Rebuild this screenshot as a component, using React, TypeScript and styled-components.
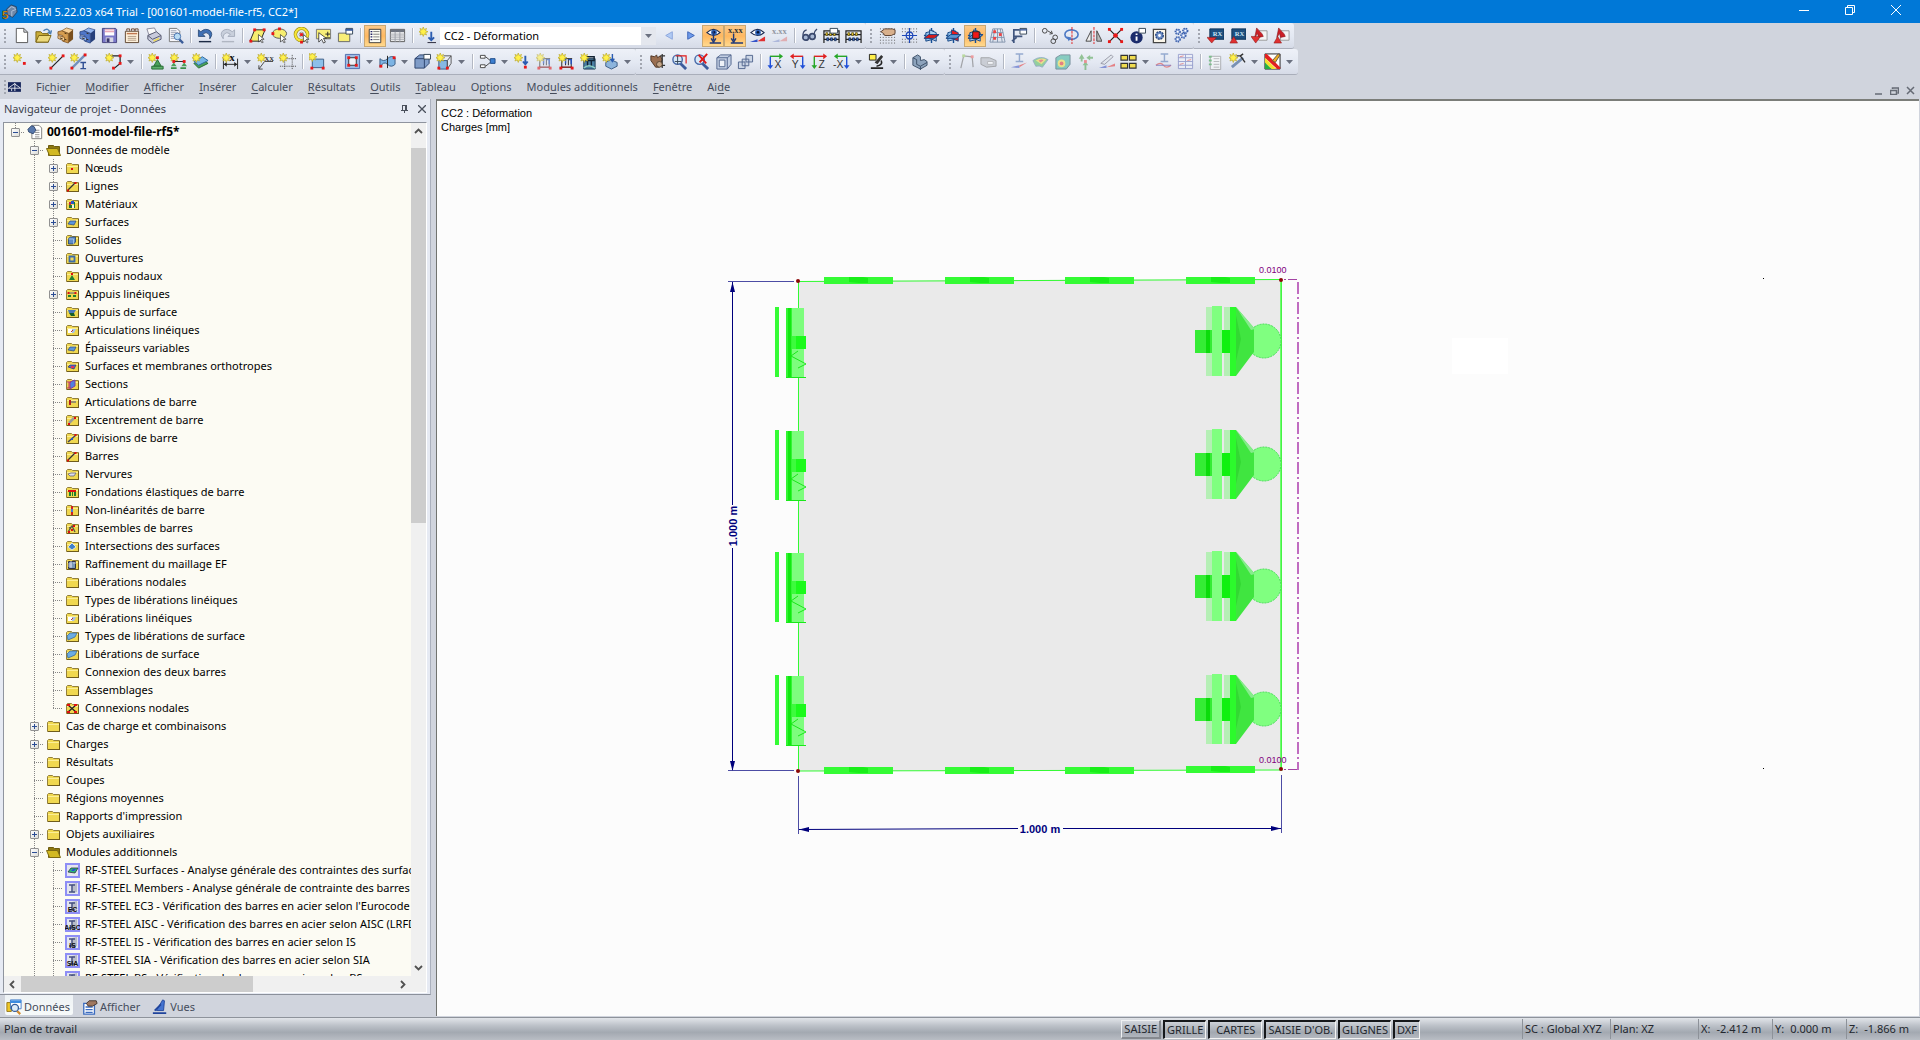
import React, { ReactNode } from "react";
import styled, { createGlobalStyle, css } from "styled-components";

/* ---------- theme ---------- */

const ui = '"Noto Sans", "Open Sans", sans-serif';
const sans = '"Liberation Sans", Arial, sans-serif';

const GlobalStyle = createGlobalStyle`
  * { box-sizing: border-box; }
  html, body, #root { height: 100%; }
  body { margin: 0; overflow: hidden; font: 11px/16px ${ui}; color: #000; }
  button { margin: 0; padding: 0; border: 0; background: none; font: inherit; color: inherit; }
  ul { margin: 0; padding: 0; list-style: none; }
`;

const Window = styled.div`
  display: flex;
  flex-direction: column;
  height: 100vh;
  background: #d0d4dd;
`;

/* ---------- title bar ---------- */

const TitleBar = styled.header`
  display: flex;
  align-items: center;
  height: 23px;
  flex: none;
  padding-left: 2px;
  background: #0078d7;
  color: #fff;
`;

const Title = styled.h1`
  flex: 1;
  margin: 0 0 0 5px;
  font-size: 11px;
  font-weight: 400;
`;

const WindowButton = styled.button`
  display: grid;
  place-items: center;
  width: 46px;
  height: 23px;
  padding: 0 2px 3px 0;
`;

/* ---------- toolbars ---------- */

const Toolbars = styled.div`
  flex: none;
`;

const ToolbarRow = styled.div`
  display: flex;
  height: 26px;
`;

const Toolbar = styled.div`
  display: flex;
  align-items: center;
  height: 26px;
  padding-right: 2px;
  border-bottom: 1px solid #a9aeba;
  border-radius: 0 3px 3px 0;
  background: linear-gradient(#eef1f8, #e3e8f2 55%, #d6dbe7);
`;

const Grip = styled.span`
  width: 10px;
  height: 16px;
  background: radial-gradient(circle at 1px 1px, #a2a6b0 1px, transparent 1px) 4px 1px / 3px 4px repeat-y;
`;

const Separator = styled.span`
  width: 8px;
  height: 15px;
  border-left: 4px solid transparent;
  background: linear-gradient(90deg, #b3b8c3 1px, #fff 1px 2px, transparent 2px) no-repeat;
`;

const ToolButton = styled.button<{ $active?: boolean; $dim?: boolean }>`
  display: grid;
  place-items: center;
  width: 22px;
  height: 22px;
  ${(p) =>
    p.$active &&
    css`
      border: 1px solid #c9a873;
      background: linear-gradient(#fbc98a, #ffb860 50%, #ffd98e);
    `}
  svg {
    display: block;
    opacity: ${(p) => (p.$dim ? 0.6 : 1)};
  }
`;

const MoreButton = styled.button`
  display: grid;
  place-items: center;
  width: 13px;
  height: 22px;
`;

const ComboBox = styled.label`
  display: flex;
  position: relative;
  width: 216px;
  height: 18px;
  margin: 0 2px;
  select {
    flex: 1;
    padding: 0 4px;
    border: 0;
    border-radius: 0;
    appearance: none;
    background: linear-gradient(90deg, #fff calc(100% - 15px), #e4e7ee 0);
    color: #000;
    font: inherit;
  }
  svg {
    position: absolute;
    right: 4px;
    top: 7px;
    pointer-events: none;
  }
`;

/* ---------- menu bar ---------- */

const MenuBar = styled.nav`
  display: flex;
  align-items: center;
  gap: 15px;
  height: 24px;
  padding-right: 2px;
  color: #454c5b;
`;

const MenuLead = styled.span`
  display: flex;
  align-items: center;
  width: 21px;
`;

const MenuItem = styled.button`
  white-space: nowrap;
  u { text-underline-offset: 2px; }
`;

const MdiButtons = styled.div`
  display: flex;
  margin-left: auto;
  padding-top: 7px;
  button { width: 16px; height: 16px; display: grid; place-items: center; }
`;

/* ---------- work area ---------- */

const Workspace = styled.main`
  display: flex;
  flex: 1;
  min-height: 0;
`;

const Navigator = styled.aside`
  display: flex;
  flex-direction: column;
  width: 431px;
  flex: none;
`;

const NavigatorPanel = styled.section`
  display: flex;
  flex: 1;
  flex-direction: column;
  min-height: 0;
  padding: 0 3px 1px;
  border-right: 1px solid #aab0bd;
  border-bottom: 1px solid #8b909b;
  background: #e6eaf3;
`;

const NavigatorHeader = styled.div`
  display: flex;
  align-items: center;
  height: 23px;
  margin-right: -3px;
  padding: 0 0 4px 1px;
  color: #3b414e;
  h2 { flex: 1; margin: 0; font-size: 11px; font-weight: 400; }
  button { width: 17px; height: 16px; display: grid; place-items: center; }
`;

const TreeFrame = styled.div`
  display: grid;
  grid-template: minmax(0, 1fr) 16px / minmax(0, 1fr) 15px;
  flex: 1;
  min-height: 0;
  border: 1px solid #8f949e;
  border-right-color: #fff;
  border-bottom-color: #fff;
  background: #f0f0f0;
`;

const Tree = styled.ul`
  overflow: hidden;
  padding-left: 2px;
  background: #fcfbf3;
`;

const TreeRow = styled.li<{ $root?: boolean }>`
  display: flex;
  align-items: center;
  height: 18px;
  font-size: ${(p) => (p.$root ? 12 : 11)}px;
  font-weight: ${(p) => (p.$root ? 700 : 400)};
  white-space: nowrap;
`;

type Line = "none" | "through" | "end" | "top";

const dots = (dir: string) => `repeating-linear-gradient(${dir}, #868686 0 1px, transparent 1px 2px)`;
const lineHeights: Record<Line, string> = { none: "0", through: "18px", end: "10px", top: "8px" };

const Guide = styled.span<{ $v: Line; $h?: boolean }>`
  display: grid;
  place-items: center;
  flex: none;
  width: 19px;
  height: 18px;
  padding-top: 1px;
  background-image: ${dots("180deg")}, ${dots("90deg")};
  background-repeat: no-repeat;
  background-position: 9px 0, 9px 9px;
  background-size: 1px ${(p) => lineHeights[p.$v]}, ${(p) => (p.$h ? "10px" : "0")} 1px;
`;

const Expander = styled.button`
  display: grid;
  place-items: center;
  width: 9px;
  height: 9px;
  border: 1px solid #919191;
  border-radius: 1px;
  background: linear-gradient(135deg, #fff, #dcdcd8);
`;

const TreeIcon = styled.span`
  display: grid;
  place-items: center;
  flex: none;
  width: 19px;
  height: 18px;
  margin-right: 3px;
`;

const VScroll = styled.div`
  display: flex;
  flex-direction: column;
  button { height: 25px; flex: none; display: grid; place-items: center; padding-bottom: 8px; }
  button:last-child { margin-top: auto; height: 17px; padding: 0; }
`;

const VThumb = styled.span`
  height: 44%;
  background: #cdcdcd;
`;

const HScroll = styled.div`
  display: flex;
  button { width: 17px; flex: none; display: grid; place-items: center; }
  button:last-child { margin-left: auto; }
`;

const HThumb = styled.span`
  width: 57%;
  background: #cdcdcd;
`;

const Tabs = styled.div`
  display: flex;
  align-items: flex-start;
  gap: 8px;
  height: 22px;
  padding-left: 5px;
  color: #454c5b;
`;

const Tab = styled.button<{ $on?: boolean }>`
  display: flex;
  align-items: center;
  gap: 2px;
  height: 20px;
  padding: 3px 3px 0 1px;
  border-radius: 0 0 2px 2px;
  background: ${(p) => (p.$on ? "linear-gradient(#eef2f5, #f7fafa)" : "none")};
`;

const Viewport = styled.section`
  display: flex;
  flex: 1;
  min-width: 0;
  margin: 0 1px 1px 5px;
  border: solid #71736f;
  border-width: 2px 0 0 1px;
  border-top-color: #7b7d79;
  background: #fcfcfc;
  position: relative;
`;

const Caption = styled.p`
  position: absolute;
  left: 4px;
  top: 5px;
  margin: 0;
  font: 11px/14px ${sans};
`;

const Drawing = styled.svg`
  display: block;
  width: 100%;
  height: 100%;
`;

/* ---------- status bar ---------- */

const StatusBar = styled.footer`
  display: flex;
  align-items: center;
  height: 23px;
  flex: none;
  border-top: 1px solid #8e939b;
  background: linear-gradient(#e2e5ea, #bcc1c8 35%, #a3a9b1 65%, #b9bdc4);
  color: #23272e;
`;

const StatusText = styled.span`
  flex: 1;
  padding-left: 4px;
`;

const Toggles = styled.div`
  display: flex;
  gap: 2px;
  margin-right: 102px;
`;

const Toggle = styled.button<{ $on?: boolean; $wide?: boolean }>`
  height: 19px;
  padding: 0 ${(p) => (p.$wide ? 6 : 2)}px;
  border: solid;
  border-width: ${(p) => (p.$on ? "2px 1px 1px 2px" : "1px 2px 2px 1px")};
  border-color: ${(p) => (p.$on ? "#15171a #f4f4f4 #f4f4f4 #15171a" : "#eef0f2 #85898f #85898f #eef0f2")};
  line-height: 15px;
  white-space: nowrap;
`;

const Pane = styled.span<{ $w: number }>`
  display: flex;
  gap: 6px;
  width: ${(p) => p.$w}px;
  height: 20px;
  padding: 2px 0 0 2px;
  border-left: 1px solid #8d9299;
  white-space: nowrap;
  &:first-of-type { border-color: transparent; }
`;

/* ---------- icon drawing ---------- */

const Svg = ({ s = 18, children }: { s?: number; children: ReactNode }) => (
  <svg width={s} height={s} viewBox="0 0 18 18" fill="none" aria-hidden="true">
    {children}
  </svg>
);

const P = ({ d, f = "none", c = "none", w = 1 }: { d: string; f?: string; c?: string; w?: number }) => (
  <path d={d} fill={f} stroke={c} strokeWidth={w} />
);

const Spark = ({ x = 0, y = 0 }: { x?: number; y?: number }) => (
  <g transform={`translate(${x} ${y})`}>
    <P d="M4.5 0l1 2.6 2.5-1.1-1.1 2.5L9.5 5 6.900 6 8 8.500 5.500 7.400 4.500 10 3.500 7.400 1 8.500 2.100 6-.5 5 2.100 4 1 1.500 3.500 2.600z" f="#fff04a" c="#b9a72a" w={0.7} />
  </g>
);

const Dot = ({ x, y, c = "#e81818" }: { x: number; y: number; c?: string }) => (
  <rect x={x - 1.5} y={y - 1.5} width="3" height="3" fill={c} />
);

const Small = ({ x, y, t, c = "#333", s = 7 }: { x: number; y: number; t: string; c?: string; s?: number }) => (
  <text x={x} y={y} fontSize={s} fill={c} fontFamily="Liberation Serif, serif" fontWeight="700">{t}</text>
);

const Eye = () => (
  <g>
    <P d="M2 6q7-7 14 0q-7 6-14 0z" f="#fff" c="#1b2a50" w={1.2} />
    <circle cx="9.500" cy="5.800" r="3" fill="#2c62b8" />
    <circle cx="9.500" cy="5.500" r="1.300" fill="#061030" />
  </g>
);

const cabinet = (light: string, mid: string, dark: string) => (
  <g>
    <P d="M5 4l5-3 7 2-4 4z" f={light} c={dark} w={0.7} />
    <P d="M12 7l5-4v10l-5 4z" f={dark} />
    <P d="M5 4l7 3v10l-6-2V9L1 8V5z" f={mid} c={dark} w={0.8} />
    <P d="M1 9l7 2v4l-7-3z" f={light} c={dark} w={0.8} />
    <P d="M8 6.500l2 .6M3 11.500l3 1M8 13l2 .6" c="#3b2b10" />
  </g>
);

const dottedGrid = (
  <path d="M1 2h16M1 5h16M1 8h16M1 11h16M1 14h16M1 17h16" stroke="#555" strokeDasharray="1 2" />
);

const plane = (which: "a" | "b" | "c") => (
  <g>
    <P d="M1 9h15M9 1v16" c="#155098" w={1.500} />
    <P d="M3 6l8-2v9l-8 2z" f="#8dc0ec" c="#174684" />
    <P d="M7 3l7 3v9l-7-3z" f={which === "b" ? "#ea1c1c" : "#a6d0f2"} c="#174684" />
    <P d="M1 12l5-4h11l-5 4z" f={which === "a" ? "#d81b1b" : "#5c96d2"} c="#174684" />
    {which === "c" && <P d="M6 5h7v7H6z" f="#f01818" c="#222" />}
  </g>
);

const axes = (h: string, v: string, t: string, right?: boolean) => (
  <g>
    {right ? <P d="M15 3.500H4" c={h} w={1.500} /> : <P d="M3 3.500h11" c={h} w={1.500} />}
    {right ? <P d="M1 3.500l4-3v6z" f={h} /> : <P d="M17 3.500l-4-3v6z" f={h} />}
    {right ? <P d="M14.500 4v10" c={v} w={1.500} /> : <P d="M3.500 4v10" c={v} w={1.500} />}
    {right ? <P d="M14.500 17l-3-4h6z" f={v} /> : <P d="M3.500 17l-3-4h6z" f={v} />}
    <text x={right ? (t.length > 1 ? 0 : 3) : 8} y="16" fontSize="11" fontFamily="Liberation Sans, sans-serif" fill="#333">{t}</text>
  </g>
);

const lens = (
  <g>
    <P d="M10 11l6 6" c="#3c5c9c" w={3} />
    <circle cx="7" cy="7" r="5" fill="#d6e8f8" stroke="#4668a8" strokeWidth="1.500" />
  </g>
);

const module = (up: boolean) => (
  <g>
    <P d="M3 2h15v11H3z" f="#1d4f7f" c="#0d3358" />
    <Small x={6} y={9} t="RX" c="#c8e2f4" s={7} />
    {up ? <P d="M1 17l4-7 4 7z" f="#e03030" c="#901818" w={0.6} /> : <P d="M0 11h10l-5 6z" f="#e03030" c="#901818" w={0.6} />}
  </g>
);

const pdf = (up: boolean) => (
  <g>
    <P d="M8 4h9v10H8z" f="#f4f4f4" c="#999" />
    <P d="M6 1c2 3 6 5 7 9l-5 1-1-4-3 4z" f="#cc1f26" c="#841015" w={0.6} />
    {up ? <P d="M1 17l4-7 4 7z" f="#e03030" c="#901818" w={0.6} /> : <P d="M0 10h10l-5 7z" f="#e03030" c="#901818" w={0.6} />}
  </g>
);

const loadBars = (dim: string) => (
  <g>
    <P d="M4 16V6M14 16V6M1 6h14M8 6v7M11 6v7" c={dim} />
    <P d="M3 7h5v4M11 7h3v5" c="#2250c0" w={1.500} />
    <P d="M3 15h12" c="#801818" w={1.500} />
    <Spark />
    <Dot x={3} y={16} />
    <Dot x={15} y={16} />
  </g>
);

const abacus = (
  <g>
    <P d="M1 17V4h16v13M1 8h16M1 13h16" c="#222" w={1.300} />
    <P d="M3 6h2v3H3zM7 6h2v3H7zM11 6h2v3h-2z" f="#f2d030" c="#4a3c00" w={0.7} />
    <P d="M4 11.500h2v3H4zM8 11.500h2v3H8zM12 11.500h2v3h-2z" f="#3a6bdc" c="#123" w={0.7} />
  </g>
);

const icons: Record<string, ReactNode> = {
  new: <P d="M3.500 1.500h8l4 4v11h-12zM11.500 1.500v4h4" f="#fff" c="#555" />,
  open: (
    <g>
      <P d="M1 5h5l2 2h6v9H1z" f="#c9ac38" c="#7a6412" />
      <P d="M4 9h13l-3 7H1z" f="#ecd97c" c="#7a6412" />
      <P d="M9 4q5-4 7 2M13.500 5.500l3 1.500 1-3.500" c="#4f80b4" w={1.500} />
    </g>
  ),
  cabinetOrange: cabinet("#f8cf94", "#d69d50", "#7a4f1c"),
  cabinetBlue: cabinet("#92b4ee", "#5077c8", "#26407c"),
  save: (
    <g>
      <P d="M1.500 1.500h14l1 1v14h-15z" f="#7a78c8" c="#44427e" />
      <P d="M4 2h10v7H4z" f="#fff" />
      <P d="M4 3h10M4 5h10" c="#e08aa0" />
      <P d="M5 11h8v5H5z" f="#d6d6e4" />
      <P d="M6 12h3v4H6z" f="#39376c" />
    </g>
  ),
  project: (
    <g>
      <P d="M2.500 4.500h14v12h-14z" f="#fdf0da" c="#5c4430" />
      <P d="M4 4V2h3v2M9 4V2h3v2M13 4V2h3v2" c="#6c4630" />
      <P d="M4 7h11" c="#c07850" w={1.500} />
      <P d="M5 10h9M5 12h9M5 14h9" c="#b29c86" />
    </g>
  ),
  print: (
    <g>
      <P d="M4 8L2 2l8-1 3 6z" f="#fafafa" c="#8a8a9c" />
      <P d="M3 9l9-4 5 4v4l-9 4-5-4z" f="#c9cbdc" c="#55586e" />
      <P d="M3 9l5 4 9-4" c="#55586e" />
      <P d="M9 15l6-3" c="#eeda50" w={1.500} />
    </g>
  ),
  preview: (
    <g>
      <P d="M2.500 1.500h8l3 3v11h-11z" f="#f7f7fb" c="#777" />
      <P d="M4 4h6M4 6h8M4 8h5M4 10h4M4 12h4" c="#9aa0b0" />
      <P d="M13 13l4 4" c="#3a5c98" w={2.500} />
      <circle cx="11" cy="10" r="3.500" fill="#b9dcf4" stroke="#4773b0" />
    </g>
  ),
  undo: (
    <g>
      <P d="M1.500 3v7h7L6 7.500q4-3 6.500 0 1.500 2 1 5 4-5 .5-8.500-5-3.500-10 1z" f="#3f70b4" c="#20406c" w={0.8} />
      <P d="M2 15.500h13" c="#1c2a44" w={1.500} />
    </g>
  ),
  redo: (
    <g>
      <P d="M16.500 3v7h-7L12 7.500q-4-3-6.500 0-1.500 2-1 5-4-5-.5-8.500 5-3.500 10 1z" f="#c9d0dc" c="#9aa2b2" w={0.8} />
      <P d="M3 15.500h13" c="#b0b6c2" w={1.500} />
    </g>
  ),
  selRhomb: (
    <g>
      <P d="M6 3h11l-5 12H1z" f="#f6ee70" c="#222" />
      <Dot x={6} y={3} /><Dot x={16} y={3} /><Dot x={2} y={15} />
      <P d="M10 8v8l2-2 2 3 1-1-2-3h3z" f="#fff" c="#222" w={0.7} />
    </g>
  ),
  selEllipse: (
    <g>
      <ellipse cx="9" cy="7" rx="7.500" ry="5" fill="#f6ee70" stroke="#555" />
      <Dot x={2} y={7} /><Dot x={9} y={2} />
      <P d="M10 8v8l2-2 2 3 1-1-2-3h3z" f="#fff" c="#222" w={0.7} />
    </g>
  ),
  selRing: (
    <g>
      <circle cx="9" cy="8" r="6.500" stroke="#8a7a00" strokeWidth="3.500" />
      <circle cx="9" cy="8" r="6.500" stroke="#f6e53a" strokeWidth="2.500" />
      <circle cx="9" cy="8" r="2.500" fill="#fff" stroke="#999" />
      <Dot x={9} y={8} /><Dot x={9} y={16} />
      <P d="M11 8v8l2-2 2 3 1-1-2-3h3z" f="#fff" c="#222" w={0.7} />
    </g>
  ),
  selPlus: (
    <g>
      <P d="M1.500 2.500h15v10h-15z" f="#f8ee78" c="#777" />
      <P d="M11 7.500h5M13.500 5v5M11 11.500h5" c="#222" />
      <P d="M4 6v10l3-3 2 4 2-1-2-4h3z" f="#fff" c="#222" w={0.8} />
    </g>
  ),
  selBox: (
    <g>
      <P d="M1.500 6.500h12v9h-12z" f="#f8ee78" c="#666" />
      <P d="M9.500 1.500h7v6h-7z" f="#fff" c="#345" />
      <P d="M9 3h8" c="#3d5c9c" w={2} />
    </g>
  ),
  list: (
    <g>
      <P d="M2.500 1.500h13v15h-13z" f="#fdfdf4" c="#333" />
      <P d="M4 4h2M4 7h2M4 10h2M4 13h2" c="#226" w={1.500} />
      <P d="M7 4h7M7 7h7M7 10h7M7 13h7" c="#777" />
    </g>
  ),
  grid: (
    <g>
      <P d="M1.500 2.500h15v13h-15z" f="#fff" c="#555" />
      <P d="M2 4h14" c="#6f7480" w={3} />
      <P d="M1 7.500h16M1 9.500h16M1 11.500h16M1 13.500h16M6.500 5v11M11.500 5v11" c="#9a9da6" />
    </g>
  ),
  newLoad: (
    <g>
      <Spark />
      <P d="M13 5v8M10 11l3 3 3-3" c="#2b5cb0" w={2} />
      <P d="M9 16.500h9" c="#223" />
    </g>
  ),
  prev: <P d="M12 5v8L5 9z" f="#b0caf4" c="#8ba6dc" />,
  next: <P d="M5 5v8l7-4z" f="#6d9aea" c="#3b64b8" />,
  eyeLoad: (<g><Eye /><P d="M9 4v10M6.500 12l2.500 4 2.500-4M5 17h12" c="#223a78" w={1.500} /></g>),
  xxxLoad: (<g><Small x={1} y={6} t="x.xx" s={9} /><P d="M7 7v7M4.500 12L7 16l2.500-4M4 17h13" c="#223a78" w={1.500} /></g>),
  eyeRes: (<g><Eye /><P d="M1 16l8-3v3z" f="#3452c8" /><P d="M9 15l8-5v5z" f="#e03030" /></g>),
  xxxRes: (<g><Small x={1} y={7} t="x.xx" s={9} c="#5a5f6a" /><P d="M1 16l8-3v3z" f="#8e9cd0" /><P d="M9 15l8-5v5z" f="#e08a8a" /></g>),
  glasses: (
    <g>
      <circle cx="5" cy="11" r="3" stroke="#3c4a6e" strokeWidth="1.800" fill="#a8b8d4" />
      <circle cx="12" cy="10" r="3" stroke="#3c4a6e" strokeWidth="1.800" fill="#a8b8d4" />
      <P d="M2 9q0-5 4-6M14 8q0-4 3-6" c="#3c4a6e" w={1.300} />
    </g>
  ),
  abacusWin: (<g>{abacus}<P d="M7.500 1.500h8v5h-8z" f="#fff" c="#345" /></g>),
  abacus,
  handGrid: (<g>{dottedGrid}<P d="M2 5l4-3h8l3 1v4l-4 2H6l-1-2z" f="#d8b08c" c="#5b4030" /></g>),
  snap: (<g><path d="M1 2h16M1 5h16M1 13h16M1 16h16" stroke="#555" strokeDasharray="1 2" /><circle cx="9" cy="9" r="3.500" stroke="#1f48b8" strokeWidth="1.300" /><P d="M9 1v16M1 9h16" c="#1f48b8" w={1.200} /></g>),
  planeA: plane("a"),
  planeB: plane("b"),
  planeC: plane("c"),
  gridDots: (<g><P d="M4 2h10l3 14H1zM3 6h12M2 11h14M9 2v14M6 2L4 16M12 2l2 14" c="#8395ad" /><Dot x={6} y={5} c="#e44" /><Dot x={12} y={8} c="#e44" /><Dot x={6} y={12} c="#e44" /></g>),
  localAxes: (<g><P d="M3 17V3h6M3 10h9M1 15l5-4" c="#40557e" w={1.800} /><P d="M9.500 1.500h7v6h-7z" f="#fff" c="#345" /><P d="M9 3h8" c="#3d5c9c" w={1.500} /></g>),
  copyMove: (<g><circle cx="4" cy="4" r="2.500" stroke="#444" /><circle cx="13" cy="15" r="2.500" stroke="#444" /><circle cx="15" cy="11" r="2.500" stroke="#444" /><P d="M7 4l5 3M9 7.500l3-.5-1-3" c="#444" /></g>),
  rotate: (<g><ellipse cx="9" cy="8" rx="7" ry="5" stroke="#4b78c4" strokeWidth="1.700" /><P d="M4 10l2 5 3-4z" f="#4b78c4" /><path d="M9.500 0v18" stroke="#e01818" strokeDasharray="3 1" /></g>),
  mirror: (<g><P d="M6.500 4v11H1z" f="#eee" c="#444" /><P d="M12.500 4v11H18z" f="#bbb" c="#444" /><path d="M9.500 0v18" stroke="#e01818" strokeDasharray="3 1" /></g>),
  divide: (<g><P d="M2 2l14 14M16 2L2 16" c="#222" w={1.300} /><Dot x={2.500} y={2.500} /><Dot x={15.500} y={2.500} /><Dot x={2.500} y={15.500} /><Dot x={15.500} y={15.500} /><circle cx="9" cy="9" r="2.500" fill="#e81818" /></g>),
  info: (<g><circle cx="8" cy="11" r="6.500" fill="#1b2c6c" /><P d="M8 7v1.500M8 10v4.500" c="#fff" w={2} /><P d="M10.500 1.500h7v5h-7z" f="#fff" c="#345" /></g>),
  gearPage: (<g><P d="M2.500 2.500h13v14h-13z" f="#fbf6ea" c="#444" w={1.300} /><circle cx="9" cy="9" r="4" fill="#6c8cc4" stroke="#274680" strokeWidth="1.500" strokeDasharray="2 1" /><circle cx="9" cy="9" r="1.500" fill="#fff" /></g>),
  gears: (
    <g>
      {[[5, 5], [13, 4], [11, 9], [5, 13]].map(([x, y]) => (
        <g key={`${x}-${y}`}><circle cx={x} cy={y} r="2.600" fill="#8ba6dc" stroke="#3c5fa8" strokeWidth="1.500" strokeDasharray="1.500 1" /><circle cx={x} cy={y} r="1" fill="#fff" /></g>
      ))}
    </g>
  ),
  rxIn: module(false), rxOut: module(true), pdfIn: pdf(false), pdfOut: pdf(true),

  node: (<g><Spark /><Dot x={12} y={11} /></g>),
  line: (<g><Spark /><P d="M3 16L16 3" c="#222" w={1.300} /><Dot x={3} y={16} /><Dot x={16} y={3} /></g>),
  member: (<g><Spark /><P d="M2 16L16 2" c="#7390bc" w={2.500} /><P d="M11 10h6M14 10v6M11 16.500h6" c="#2f4f94" w={1.500} /><Dot x={2} y={16} /><Dot x={16} y={2} /></g>),
  poly: (<g><P d="M5 3h11v8l-6 5" c="#222" w={1.300} /><Spark /><Dot x={16} y={3} /><Dot x={16} y={11} /><Dot x={9} y={16} /></g>),
  nodalSupport: (<g><Spark /><Dot x={10} y={5} /><P d="M10 7l4 7H6z" f="#4ba05a" c="#236b32" /><P d="M4 14h12v3H4z" f="#5fb06c" c="#236b32" /></g>),
  lineSupport: (<g><Spark /><P d="M4 9h12" c="#222" /><P d="M4 10l3 4H1zM15 10l3 4h-6z" f="#4ba05a" /><P d="M1 16h6M11 16h6" c="#3a8f4a" w={2} /><Dot x={4} y={9} /><Dot x={15} y={9} /></g>),
  surfaceSupport: (<g><P d="M2 11l5 5 10-5-6-4z" f="#4ba05a" c="#236b32" /><P d="M2 9l5 4 10-5-6-4z" f="#76b6e6" c="#2a68a0" /><Spark /></g>),
  dimension: (<g><P d="M1.500 6v11M16.500 6v11M2 12h14" c="#222" /><P d="M2 12l3-2.500v5zM16 12l-3-2.500v5z" f="#222" /><Spark /><Small x={8} y={8} t="x" s={11} c="#111" /></g>),
  comment: (<g><P d="M2 17L8 9h9M2 17v-4M2 17h4" c="#444" /><Spark /><Small x={8} y={8} t="XX" s={7} /></g>),
  guides: (<g><path d="M6 2v16M14 2v16M1 6h17M1 14h17" stroke="#444" strokeDasharray="1 1" /><Spark /></g>),
  surface: (<g><P d="M3.500 6.500h12v9h-12z" f="#8cc0ea" c="#3c5c84" /><Spark x={-1} y={-1} /><Dot x={15} y={16} /><Dot x={3} y={16} /></g>),
  opening: (<g><P d="M1.500 1.500h15v15h-15z" f="#9dbce4" c="#4c6cac" /><P d="M5 5h8v8H5z" f="#eef2f8" c="#333" /><Dot x={5} y={5} /><Dot x={13} y={5} /><Dot x={5} y={13} /><Dot x={13} y={13} /></g>),
  curved: (<g><P d="M1 6q4 4 8 0t8-1v7q-4 4-8 0t-8 3z" f="#7db4e4" c="#3c5c84" /><P d="M9 3v13" c="#222" /><Dot x={2} y={14} /><Dot x={16} y={5} /></g>),
  solid: (<g><P d="M1 6l5-4h10v9l-5 5H1z" f="#7f9cc8" c="#2a426c" /><P d="M1 6h10v10M11 6l5-4" c="#2a426c" /><P d="M10.500 1.500h7v5h-7z" f="#fff" c="#345" /></g>),
  solidNew: (<g><P d="M3 8h9v9H3z" f="#86b8e4" c="#3c5c84" /><P d="M8 3h8v8l-4 6V8l4-5" c="#555" /><Spark /><Dot x={3} y={16} /><Dot x={12} y={16} /></g>),
  connection: (<g><P d="M1.500 2.500h5v3h-5zM1.500 12.500h5v3h-5z" f="#fff" c="#444" /><P d="M7 4l5 4M7 14l5-4" c="#444" /><P d="M12 6h5v5h-5z" f="#3c7fd0" c="#1d4a88" /></g>),
  pointLoad: (<g><Spark /><P d="M12 3v8M9.500 9l2.500 3 2.500-3" c="#2b5cb0" w={2} /><Dot x={12} y={15} /></g>),
  memberLoad: loadBars("#222"),
  solidLoad: (<g><P d="M4 6h12v11H4z" f="#4a7fa4" c="#1d3c54" /><P d="M5 4h10v4H5M8 8v6M12 8v6" c="#123" w={1.500} /><P d="M4 16q5-5 12 0" c="#8cd0c4" w={1.500} /><Spark /></g>),
  freeLoad: (<g><P d="M4 10l5-3 7 3v4l-6 3-6-3z" f="#8cb4dc" c="#3c5c84" /><P d="M11 1v7M9 6l2 3 2-3" c="#2b5cb0" w={1.500} /><Spark /></g>),
  pan: (<g><P d="M2 3l4 1 2-2 1 3 3-2 2 4-3 8H7L2 8z" f="#9a6e50" c="#4c3424" /><P d="M12 3h5M14 1v15M8 13h9" c="#333" w={1.300} /><circle cx="11" cy="12" r="3" fill="#c6a688" stroke="#543" /></g>),
  zoomWin: (<g>{lens}<P d="M5 3h11v8" c="#e01818" w={1.200} /><P d="M7 3v9M4 9h7" c="#345" /></g>),
  zoomAll: (<g>{lens}<P d="M6 2l8 9M15 1L7 10" c="#e01818" w={2} /></g>),
  box3d: (<g><P d="M2 5l4-3h11v10l-4 5H2z" f="#c4d0e4" c="#52668e" /><P d="M2 5h11v12M13 5l4-3" c="#52668e" /><P d="M4.500 7.500h6v7h-6z" f="#eef2f8" c="#52668e" /></g>),
  boxes: (<g><P d="M9.500 2.500h7v7h-7zM5.500 6.500h7v7h-7zM1.500 9.500h7v7h-7z" f="#ccd6e6" c="#52668e" /></g>),
  viewX: axes("#27a727", "#2050d8", "X"),
  viewY: axes("#e02020", "#2050d8", "Y", true),
  viewZ: axes("#e02020", "#27a727", "Z"),
  viewNegX: axes("#27a727", "#2050d8", "-X", true),
  microscope: (<g><P d="M14 2l2 2-6 8-3-2z" f="#333" /><P d="M9 14q7-1 5-6M3 16h13" c="#222" w={1.700} /><P d="M1.500 1.500h7v6h-7z" f="#fff04a" c="#222" /></g>),
  solidView: (<g><P d="M2 5l5-3 3 2v4l4-1 3 2v4l-7 4-8-4z" f="#8da3bc" c="#3d5068" /><P d="M2 5l4 2v5l4 2v4M10 14l7-4" c="#3d5068" /></g>),
  frame: (<g><P d="M3 16L6 3l9 1 1 11" c="#777" w={1.300} /><Dot x={6} y={3} c="#9c6" /><Dot x={15} y={4} c="#e66" /></g>),
  film: (<g><P d="M1 5h9l7 3v6l-10 1-6-3z" f="#b9bcc2" c="#777" /><P d="M8 9h6v3H8z" f="#fff" c="#999" /></g>),
  resSection: (<g><P d="M6 1h8M10 1v8M6 9h8" c="#5f7fb8" w={1.500} /><P d="M1 15l9-2v3z" f="#4b60c8" /><P d="M10 13l8-3-8 5z" f="#e84040" /></g>),
  resSurface: (<g><P d="M1 8q8-6 16-1l-6 8q-3-2-7-1z" f="#60c068" c="#68a" /><P d="M4 8q6-4 11-1l-5 5z" f="#f0d848" /><P d="M7 8q4-2 5 0l-3 2z" f="#e85050" /></g>),
  resSolid: (<g><P d="M2 5l5-3h10v10l-4 5H2z" f="#48b8a0" c="#356" /><circle cx="8" cy="11" r="4" fill="#f0e048" /><circle cx="8" cy="11" r="2" fill="#e83c3c" /></g>),
  resSupport: (<g><P d="M6 1l3 5H7v3H5V6H3zM9 18V13H7l3-4 3 4h-2v5z" f="#5aa858" /><P d="M11 5l4-3v2h3v2h-3v2z" f="#5aa858" /><Dot x={10} y={9} c="#e55" /></g>),
  resCut: (<g><P d="M3 11L14 2l2 2-9 8z" f="#dfe4ea" c="#667" /><P d="M1 16l8-3v3z" f="#4b60c8" /><P d="M9 15l9-4v3z" f="#e84040" /></g>),
  panels: (<P d="M1 2.500h7v5H1zM10 2.500h7v5h-7zM1 11h7v5H1zM10 11h7v5h-7z" f="#f0dc50" c="#333" w={1.200} />),
  resWave: (<g><P d="M6 1h8M10 1v8M6 9h8" c="#5f7fb8" w={1.500} /><P d="M1 13q5-4 8 0t8 0" c="#e04848" w={1.300} /><P d="M1 13h16" c="#44a" /></g>),
  resTable: (<g><P d="M1.500 1.500h15v15h-15z" f="#eef1fa" c="#6a74b8" /><P d="M1 5h16M1 9h16M1 13h16M9 1v16" c="#6a74b8" /><P d="M3 4l4-1M11 8l4-1M3 12l4-1" c="#e05050" /></g>),
  report: (<g><P d="M3.500 3.500h11v14h-11z" f="#fafafa" c="#888" /><P d="M2 4h3M2 8h3M2 12h3" c="#38a048" w={2} /><P d="M7 6h6M7 9h6M7 12h6M7 15h6" c="#999" /></g>),
  magic: (<g><P d="M3 15L15 5" c="#7790b4" w={3} /><P d="M8 3h4l5 7M12 3l3-2" c="#333" w={1.500} /><Spark /></g>),
  colors: (<g><P d="M1 1h16v16H1z" f="#fff" c="#222" /><P d="M1 1h2l14 14v2h-3L1 5z" f="#e32020" /><P d="M1 5l12 12H8L1 10z" f="#f5e02c" /><P d="M1 10l7 7H1z" f="#28b040" /><P d="M9 8l6-7 2 1-5 8z" f="#f0b020" c="#654" /></g>),
};

const Caret = () => (
  <svg width="7" height="4" viewBox="0 0 7 4" aria-hidden="true"><path d="M0 0h7L3.500 4z" fill="#6b7180" /></svg>
);

const Chevron = ({ r }: { r: number }) => (
  <svg width="9" height="9" viewBox="0 0 9 9" fill="none" aria-hidden="true">
    <path d="M1 6l3.500-3.500L8 6" stroke="#505050" strokeWidth="1.800" transform={`rotate(${r} 4.500 4.500)`} />
  </svg>
);

/* ---------- toolbar content: "|" separator, "v" drop-down arrow, "*" active, "~" unavailable ---------- */

const rowOne = [
  "new open cabinetOrange cabinetBlue save project print preview | undo redo | selRhomb selEllipse selRing selPlus selBox | *list grid | newLoad combo prev next *eyeLoad *xxxLoad eyeRes ~xxxRes | glasses abacusWin abacus",
  "handGrid snap planeA planeB *planeC gridDots localAxes | copyMove rotate mirror divide info gearPage gears",
  "rxIn rxOut pdfIn pdfOut",
];

const rowTwo = [
  "node v line member v poly v | nodalSupport lineSupport surfaceSupport | dimension v comment guides | surface v opening v curved v solid solidNew v | connection v pointLoad ~memberLoad memberLoad solidLoad freeLoad v",
  "pan zoomWin zoomAll box3d boxes | viewX viewY viewZ viewNegX v microscope v | solidView v",
  "~frame ~film | ~resSection ~resSurface ~resSolid ~resSupport ~resCut panels v ~resWave ~resTable | ~report magic v colors v",
];

const CaseSelect = () => (
  <ComboBox>
    <select aria-label="Cas de charge" defaultValue="CC2">
      <option value="CC2">CC2 - Déformation</option>
    </select>
    <Caret />
  </ComboBox>
);

const Tools = ({ items }: { items: string }) => (
  <Toolbar role="toolbar">
    <Grip />
    {items.split(" ").map((token, i) => {
      if (token === "|") return <Separator key={i} />;
      if (token === "v") return <MoreButton key={i} aria-label="Plus"><Caret /></MoreButton>;
      if (token === "combo") return <CaseSelect key={i} />;
      const name = token.replace(/^[*~]/, "");
      return (
        <ToolButton key={i} aria-label={name} $active={token[0] === "*"} $dim={token[0] === "~"}>
          <Svg s={name === "list" ? 16 : 17}>{icons[name]}</Svg>
        </ToolButton>
      );
    })}
  </Toolbar>
);

/* ---------- menu content: the letter after "_" is the access key ---------- */

const menus = ["Fic_hier", "_Modifier", "_Afficher", "_Insérer", "_Calculer", "_Résultats", "_Outils", "_Tableau", "O_ptions", "Mod_ules additionnels", "_Fenêtre", "Ai_de"];

const MenuLabel = ({ text }: { text: string }) => {
  const [before, after] = text.split("_");
  return <>{before}<u>{after[0]}</u>{after.slice(1)}</>;
};

/* ---------- tree content ---------- */

type Item = { level: number; label: string; icon: string; box?: "+" | "-" };

const model: [string, string, ("+" | undefined)?][] = [
  ["Nœuds", "dot", "+"], ["Lignes", "line", "+"], ["Matériaux", "material", "+"], ["Surfaces", "surface", "+"],
  ["Solides", "solid"], ["Ouvertures", "opening"], ["Appuis nodaux", "support"], ["Appuis linéiques", "supports", "+"],
  ["Appuis de surface", "surfSupport"], ["Articulations linéiques", "hinge"], ["Épaisseurs variables", "surface"],
  ["Surfaces et membranes orthotropes", "ortho"], ["Sections", "section"], ["Articulations de barre", "memberHinge"],
  ["Excentrement de barre", "eccentric"], ["Divisions de barre", "division"], ["Barres", "line"], ["Nervures", "rib"],
  ["Fondations élastiques de barre", "foundation"], ["Non-linéarités de barre", "nonlinear"], ["Ensembles de barres", "sets"],
  ["Intersections des surfaces", "intersection"], ["Raffinement du maillage EF", "mesh"], ["Libérations nodales", "plain"],
  ["Types de libérations linéiques", "plain"], ["Libérations linéiques", "hinge"], ["Types de libérations de surface", "release"],
  ["Libérations de surface", "release"], ["Connexion des deux barres", "plain"], ["Assemblages", "plain"], ["Connexions nodales", "cross"],
];

const modules: [string, string][] = [
  ["RF-STEEL Surfaces - Analyse générale des contraintes des surfaces", "m:surf"],
  ["RF-STEEL Members - Analyse générale de contrainte des barres", "m:"],
  ["RF-STEEL EC3 - Vérification des barres en acier selon l'Eurocode 3", "m:EC"],
  ["RF-STEEL AISC - Vérification des barres en acier selon AISC (LRFD ou ASD)", "m:AISC"],
  ["RF-STEEL IS - Vérification des barres en acier selon IS", "m:IS"],
  ["RF-STEEL SIA - Vérification des barres en acier selon SIA", "m:SIA"],
  ["RF-STEEL BS - Vérification des barres en acier selon BS", "m:BS"],
];

const items: Item[] = [
  { level: 0, label: "001601-model-file-rf5*", icon: "file", box: "-" },
  { level: 1, label: "Données de modèle", icon: "opened", box: "-" },
  ...model.map(([label, icon, box]) => ({ level: 2, label, icon, box })),
  { level: 1, label: "Cas de charge et combinaisons", icon: "plain", box: "+" },
  { level: 1, label: "Charges", icon: "plain", box: "+" },
  { level: 1, label: "Résultats", icon: "plain" },
  { level: 1, label: "Coupes", icon: "plain" },
  { level: 1, label: "Régions moyennes", icon: "plain" },
  { level: 1, label: "Rapports d'impression", icon: "plain" },
  { level: 1, label: "Objets auxiliaires", icon: "plain", box: "+" },
  { level: 1, label: "Modules additionnels", icon: "opened", box: "-" },
  ...modules.map(([label, icon]) => ({ level: 2, label, icon })),
];

const badges: Record<string, ReactNode> = {
  dot: <P d="M6 6h2v2H6z" f="#e01010" />,
  line: <g><P d="M3 10l7-7" c="#333" w={1.300} /><P d="M9.500 2h2v2h-2zM2 9.500h2v2H2z" f="#e01010" /></g>,
  material: <g><P d="M4 4h2v4H4z" f="#c02848" /><P d="M6 3h3v3H6z" f="#2858c8" /><P d="M4 7h3v3H4zM9 4h1v6H9z" f="#207830" /><P d="M7 7h2v3H7z" f="#f0f0f0" /></g>,
  surface: <P d="M3 8l2-3h6L9 9z" f="#5c96dc" c="#284878" w={0.7} />,
  solid: <g><P d="M3.500 4.500l2-1.500h5v5l-2 2h-5z" f="#5e8cc8" c="#20406c" w={0.8} /><P d="M3.500 5h5v5" c="#b8d0f0" w={0.7} /></g>,
  opening: <P d="M4.500 4.500h5v5h-5z" f="#f0d860" c="#3c6ca8" w={1.800} />,
  support: <g><P d="M6 3h2v2H6z" f="#e01010" /><P d="M7 5l3 5H4z" f="#208030" /></g>,
  supports: <g><P d="M3 5h8" c="#555" /><P d="M2.500 4h2v2h-2zM9.500 4h2v2h-2z" f="#e01010" /><P d="M3 7h3v2H3zM8 7h3v2H8z" f="#208030" /></g>,
  surfSupport: <g><P d="M3 4h8l-2 3H4z" f="#4878b8" /><P d="M4 7h5l1 3H6z" f="#186028" /></g>,
  hinge: <g><P d="M3 5h5l-1 4H3z" f="#fff" /><P d="M7 5h4l-2 4H7z" f="#a8c4e8" /><P d="M6 8l2-2" c="#c03030" /></g>,
  ortho: <g><P d="M3 7l2-2h6L9 9z" f="#5070c8" c="#303068" w={0.7} /><P d="M6 6h3v2H6z" f="#e03060" /></g>,
  section: <g><P d="M5 4l5-2v6l-5 3z" f="#5080e0" c="#8040a0" /><P d="M2 4h4M4 4v6M2 10h4" c="#c03060" /></g>,
  memberHinge: <g><P d="M4 6h7" c="#777" w={1.500} /><P d="M4 4h2v5H4z" f="#b02020" /></g>,
  eccentric: <g><P d="M4 9l5-5" c="#999" w={2.500} /><P d="M9 3h2v2H9zM3 9h2v2H3z" f="#e01010" /></g>,
  division: <g><P d="M3 10l8-7" c="#445" w={1.500} /><P d="M6 6h2v2H6z" f="#2858c8" /><P d="M9.500 2h2v2h-2z" f="#e01010" /></g>,
  rib: <g><P d="M3 6l3-1h5L9 8H5z" f="#dde" c="#667" w={0.8} /></g>,
  foundation: <g><P d="M3 5h8" c="#e01010" w={2} /><P d="M4 6h2v4H4zM7 6h1v4H7zM9 6h2v4H9z" f="#208030" /></g>,
  nonlinear: <g><P d="M7 2v9" c="#d02020" w={2} /><P d="M7 5v3" c="#4878d8" w={2} /></g>,
  sets: <g><P d="M3 10l4-6 3 6M4 6l6-3" c="#554" w={1.300} /><P d="M3 9h2v2H3zM8 3h2v2H8zM6 7h2v2H6z" f="#e01010" /></g>,
  intersection: <P d="M3 7l4-4 4 4-4 3z" f="#4080c8" c="#e8f0f8" w={0.8} />,
  mesh: <g><P d="M3.500 3.500h7v7h-7z" f="#7898b8" c="#334" /><P d="M3 6h4M3 8h4M6 3v7M8 5h3" c="#dde" w={0.8} /></g>,
  release: <P d="M2 6l3-3h7l-2 4-7 3z" f="#6aace4" c="#3c6c9c" w={0.8} />,
  cross: <g><P d="M3 3l8 7M11 3l-8 7" c="#222" w={1.300} /><P d="M2 2h3v2H2zM9 2h3v2H9zM2 9h3v2H2zM9 9h3v2H9z" f="#e01010" /></g>,
};

const TreeGlyph = ({ name }: { name: string }) => {
  if (name === "file")
    return (
      <svg width="16" height="16" viewBox="0 0 18 18" aria-hidden="true">
        <P d="M5.500 1.500h8l3 3v12h-11z" f="#fff" c="#777" />
        <P d="M9 7h5M9 9.500h5M9 12h5M9 14.500h5" c="#888" />
        <P d="M1 6l4-4 3 1 2 4-3 4-5-2z" f="#5878ac" c="#2c446c" />
      </svg>
    );
  if (name.startsWith("m:")) {
    const tag = name.slice(2);
    return (
      <svg width="15" height="15" viewBox="0 0 15 15" aria-hidden="true">
        <path d="M1 1h13v13H1z" fill="#e4e6ee" stroke="#8e8ef6" strokeWidth="2" />
        {tag === "surf" ? (
          <g><P d="M3 9l3-4h7l-3 5z" f="#28b878" c="#334" w={0.8} /><P d="M6 8l2-2h3l-2 2z" f="#2848d8" /></g>
        ) : (
          <g>
            <P d="M7 3l5-1v9l-4 1z" f="#b8bcc8" />
            <P d="M4 4h6M7 4v7M4 11h6" c="#445080" w={1.500} />
            {tag && (
              <text x="7.500" y="13" textAnchor="middle" fontSize="7" fontFamily="Liberation Sans, sans-serif" fontWeight="700" fill="#111">{tag}</text>
            )}
          </g>
        )}
      </svg>
    );
  }
  return (
    <svg width="15" height="13" viewBox="0 0 15 13" aria-hidden="true">
      {name === "opened" ? (
        <g>
          <P d="M2.500 1.500h5l1 1h5v9h-11z" f="#8d7810" c="#6d5c10" />
          <P d="M.5 4.500h11l3 7h-11z" f="#d2b922" c="#7c6a12" />
        </g>
      ) : (
        <g>
          <P d="M1.500 2.500l1-1h4l1 1h6v9h-12z" f="#f0d850" c="#94803a" />
          <P d="M2 4.500h11" c="#fbee96" />
          <P d="M2 11.500h12M13.500 3v9" c="#6f5c1c" />
        </g>
      )}
      {badges[name]}
    </svg>
  );
};

const isLast = (i: number) => {
  for (let k = i + 1; k < items.length; k++) {
    if (items[k].level === items[i].level) return false;
    if (items[k].level < items[i].level) return true;
  }
  return false;
};

const TreeView = () => (
  <Tree role="tree">
    {items.map((item, i) => (
      <TreeRow key={item.label} role="treeitem" $root={item.level === 0}>
        {item.level > 0 && <Guide $v="none" />}
        {item.level > 1 && <Guide $v="through" />}
        <Guide $v={item.level === 0 ? "top" : isLast(i) ? "end" : "through"} $h>
          {item.box && (
            <Expander aria-label={item.box === "+" ? "Développer" : "Réduire"}>
              <svg width="7" height="7" viewBox="0 0 7 7" aria-hidden="true">
                <path d={item.box === "+" ? "M1 3.500h5M3.500 1v5" : "M1 3.500h5"} stroke="#2b4d94" />
              </svg>
            </Expander>
          )}
        </Guide>
        <TreeIcon><TreeGlyph name={item.icon} /></TreeIcon>
        {item.label}
      </TreeRow>
    ))}
  </Tree>
);

/* ---------- model drawing ---------- */

const navy = "#00007c";
const steps = [0, 1, 2, 3];

const EdgeBar = ({ x, y }: { x: number; y: number }) => (
  <g>
    <rect x={x} y={y - 3} width="69" height="7" fill="#35fb35" />
    <path d={`M${x + 25} ${y - 3}h14l5 1v5h-9l-10-1z`} fill="#19ee19" />
  </g>
);

const SlideSupport = ({ y }: { y: number }) => (
  <g>
    <rect x="338" y={y} width="4" height="70" fill="#35fb35" />
    <rect x="349" y={y + 1} width="18" height="70" fill="#7dfd7d" />
    <rect x="349" y={y + 1} width="6" height="70" fill="#33f533" />
    <rect x="351" y={y + 1} width="3" height="70" fill="#12e812" />
    <rect x="355" y={y + 29} width="14" height="13" fill="#3dfb3d" />
    <rect x="359" y={y + 29} width="10" height="13" fill="#1cfa1c" />
    <path d={`M361 ${y + 44}l-7 5 15 8-8 4M349 ${y + 70.5}h20`} stroke="#19e819" fill="none" />
  </g>
);

const BallSupport = ({ y }: { y: number }) => (
  <g>
    <rect x="769" y={y - 34} width="6" height="69" fill="#b5efb5" />
    <rect x="758" y={y - 11} width="18" height="23" fill="#35ec35" />
    <rect x="769" y={y - 11} width="4" height="23" fill="#0bdc0b" />
    <rect x="775" y={y - 35} width="10" height="70" fill="#80ff80" />
    <rect x="787" y={y - 34} width="6" height="69" fill="#b5efb5" />
    <rect x="785" y={y - 11} width="8" height="23" fill="#10f010" />
    <circle cx="827" cy={y} r="17" fill="#80ff80" stroke="#48dc58" strokeDasharray="2 1" />
    <path d={`M799 ${y - 34}l18 21v24l-18 24z`} fill="#40e540" />
    <path d={`M799 ${y - 34}l19 22-4 1z`} fill="#86ec8c" />
    <path d={`M793 ${y - 34}h6v69h-6z`} fill="#2cfa2c" />
    <path d={`M799 ${y - 26}l5 24-5 22z`} fill="#33d833" />
  </g>
);

const ModelDrawing = () => (
  <Drawing role="img" aria-label="Modèle CC2 : surface 1.000 m × 1.000 m">
    <rect x="1015" y="237" width="56" height="36" fill="#fff" />
    <path d="M361 180l484-2v491l-484 1z" fill="#eaeaea" />
    <path d="M361 180.500l484-2M361.500 670l484-1M361.500 180v490" stroke="#32fa32" fill="none" />
    <path d="M844 179v490" stroke="#70fb70" strokeWidth="2" />
    {steps.map((n) => <EdgeBar key={n} x={387 + Math.round(n * 120.7)} y={179} />)}
    {steps.map((n) => <EdgeBar key={n} x={387 + Math.round(n * 120.7)} y={669 - (n > 2 ? 1 : 0)} />)}
    {steps.map((n) => <SlideSupport key={n} y={206 + Math.round(n * 122.5)} />)}
    {steps.map((n) => <BallSupport key={n} y={240 + Math.round(n * 122.5)} />)}
    <path d="M844.500 179v490" stroke="#45f545" />

    <g stroke={navy} fill="none">
      <path d="M291 180.500h66M291 669.500h66M361.500 675v58M844.500 674v58" stroke="#4c4ca4" />
      <path d="M295.500 181v223M295.500 447v222M362 728.500l219-1M626 727.500h218" />
    </g>
    <path d="M295.500 181l-2.500 10h5zM295.500 670l-2.500-10h5zM362 728.500l10-2.500v5zM844 727.500l-10-2.500v5z" fill={navy} />
    <g fill={navy} fontFamily="Liberation Sans, sans-serif" fontSize="11" fontWeight="700" textAnchor="middle">
      <text transform="translate(300 425) rotate(-90)">1.000 m</text>
      <text x="603" y="732">1.000 m</text>
    </g>

    <path d="M847 178.500h13M847 668.500h13" stroke="#a344a3" strokeDasharray="2 2 9 2" />
    <path d="M861 181v488" stroke="#c06cc0" strokeWidth="2" strokeDasharray="12 3 2 3" />
    <g fill="#80007c" fontFamily="Liberation Sans, sans-serif" fontSize="9">
      <text x="822" y="172">0.0100</text>
      <text x="822" y="662">0.0100</text>
    </g>
    <g fill="#8c0808">
      <circle cx="361" cy="180" r="2" /><circle cx="844" cy="179" r="2" />
      <circle cx="361" cy="670" r="2" /><circle cx="844" cy="668" r="2" />
    </g>
    <path d="M1326 177h1v1h-1zM1326 667h1v1h-1z" fill="#000" />
  </Drawing>
);

/* ---------- page ---------- */

export default function App() {
  return (
    <Window>
      <GlobalStyle />
      <TitleBar>
        <svg width="16" height="16" viewBox="0 0 18 18" aria-hidden="true">
          <P d="M5 6l5-5 6 2 1 6-5 6-6-3z" f="#6d87a8" c="#26405f" />
          <P d="M7 6l4-3 4 2M11 8l5-2M11 8v6" c="#b3c6dc" />
          <text x="0" y="17" fontSize="13" fontFamily="Liberation Sans, sans-serif" fontWeight="700" fill="#f5a623" stroke="#3a2a08" strokeWidth="0.500">5</text>
        </svg>
        <Title>RFEM 5.22.03 x64 Trial - [001601-model-file-rf5, CC2*]</Title>
        {[
          ["Réduire", "M0 5.500h10"],
          ["Restaurer", "M.5 2.500h7v7h-7zM2.500 2.500v-2h7v7h-2"],
          ["Fermer", "M0 0l10 10M10 0L0 10"],
        ].map(([label, d]) => (
          <WindowButton key={label} aria-label={label}>
            <svg width="10" height="10" viewBox="0 0 10 10" fill="none" stroke="#fff" aria-hidden="true"><path d={d} /></svg>
          </WindowButton>
        ))}
      </TitleBar>

      <Toolbars>
        <ToolbarRow>{rowOne.map((t) => <Tools key={t} items={t} />)}</ToolbarRow>
        <ToolbarRow>{rowTwo.map((t) => <Tools key={t} items={t} />)}</ToolbarRow>
        <MenuBar>
          <MenuLead>
            <Grip />
            <svg width="16" height="12" viewBox="0 0 16 12" aria-hidden="true">
              <path d="M0 0h16v12H0z" fill="#17275c" />
              <path d="M0 7.500h16M8.500 1v10M1 7l7-5 7 5M4.500 8v3" stroke="#fff" fill="none" />
            </svg>
          </MenuLead>
          {menus.map((m) => <MenuItem key={m}><MenuLabel text={m} /></MenuItem>)}
          <MdiButtons>
            {[["Réduire", "M1 8h7"], ["Restaurer", "M.5 4.500h6v4h-6zM2.500 3v-1h6v5h-1M2 2h7"], ["Fermer", "M1 1l7 7M8 1L1 8"]].map(([label, d]) => (
              <button key={label} aria-label={label}>
                <svg width="9" height="9" viewBox="0 0 9 9" fill="none" stroke="#666b75" strokeWidth="1.500" aria-hidden="true"><path d={d} /></svg>
              </button>
            ))}
          </MdiButtons>
        </MenuBar>
      </Toolbars>

      <Workspace>
        <Navigator>
          <NavigatorPanel>
            <NavigatorHeader>
              <h2>Navigateur de projet - Données</h2>
              <button aria-label="Épingler">
                <svg width="7" height="8" viewBox="0 0 7 8" fill="none" stroke="#4a505c" aria-hidden="true"><path d="M1.500 0v5M1 .5h4M4.500 0v5M5.500 0v5M0 5.500h7M3.500 6v2" /></svg>
              </button>
              <button aria-label="Fermer">
                <svg width="8" height="8" viewBox="0 0 8 8" fill="none" stroke="#4a505c" strokeWidth="1.300" aria-hidden="true"><path d="M0 0l8 8M8 0L0 8" /></svg>
              </button>
            </NavigatorHeader>
            <TreeFrame>
              <TreeView />
              <VScroll>
                <button aria-label="Haut"><Chevron r={0} /></button>
                <VThumb />
                <button aria-label="Bas"><Chevron r={180} /></button>
              </VScroll>
              <HScroll>
                <button aria-label="Gauche"><Chevron r={-90} /></button>
                <HThumb />
                <button aria-label="Droite"><Chevron r={90} /></button>
              </HScroll>
            </TreeFrame>
          </NavigatorPanel>
          <Tabs role="tablist">
            <Tab role="tab" $on>
              <Svg s={16}><P d="M1 4h5v10H1z" f="#f0c828" c="#907010" /><P d="M5 1h12v10H5z" f="#fff" c="#3c78c8" /><P d="M5 3h12" c="#3c8ce0" w={3} /><P d="M12 13l4 4" c="#d08a30" w={2.500} /><circle cx="10" cy="10" r="4" fill="#dcecf8" stroke="#345c98" strokeWidth="1.500" /></Svg>
              Données
            </Tab>
            <Tab role="tab">
              <Svg s={16}><P d="M2 5h12v12H2z" f="#fff" c="#3c6cc0" w={1.500} /><P d="M4 9h8M4 12h8M4 15h8" c="#3c6cc0" w={1.500} /><P d="M5 5l3-3h8l1 3-5 3H7z" f="#a07860" c="#403028" /></Svg>
              Afficher
            </Tab>
            <Tab role="tab">
              <Svg s={16}><P d="M12 1l2 1-1 11H5z" f="#4474d0" c="#20449c" /><P d="M3 13l7-7M1 16h15" c="#20449c" w={2} /></Svg>
              Vues
            </Tab>
          </Tabs>
        </Navigator>

        <Viewport>
          <Caption>CC2 : Déformation<br />Charges [mm]</Caption>
          <ModelDrawing />
        </Viewport>
      </Workspace>

      <StatusBar>
        <StatusText>Plan de travail</StatusText>
        <Toggles>
          <Toggle>SAISIE</Toggle>
          <Toggle $on>GRILLE</Toggle>
          <Toggle $on $wide>CARTES</Toggle>
          <Toggle $on>SAISIE D'OB.</Toggle>
          <Toggle $on>GLIGNES</Toggle>
          <Toggle $on>DXF</Toggle>
        </Toggles>
        <Pane $w={88}>SC : Global XYZ</Pane>
        <Pane $w={88}>Plan: XZ</Pane>
        <Pane $w={74}><span>X:</span><span>-2.412 m</span></Pane>
        <Pane $w={74}><span>Y:</span><span>0.000 m</span></Pane>
        <Pane $w={74}><span>Z:</span><span>-1.866 m</span></Pane>
      </StatusBar>
    </Window>
  );
}
